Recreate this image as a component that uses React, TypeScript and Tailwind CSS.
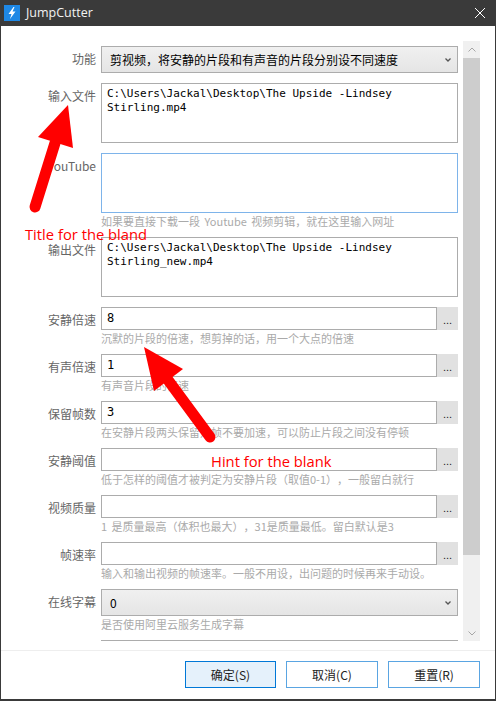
const CJK = 'font-["Noto_Sans_CJK_SC",sans-serif]';

function Row({ label, hint, children }: { label: string; hint?: string; children: React.ReactNode }) {
  return (
    <div className={hint ? 'mb-0 flex' : 'mb-[10px] flex'}>
      <div className="w-[95px] shrink-0 whitespace-nowrap pt-[5px] pr-0 text-right text-[12px] leading-[16px] text-[#666]">{label}</div>
      <div className="ml-[5px] w-[357px] shrink-0">
        {children}
        {hint && (
          <div className="h-[24px] whitespace-nowrap pt-[1px] text-[11px] leading-[14px] text-[#aaa] [text-spacing-trim:space-all] [word-spacing:2px]">
            {hint}
          </div>
        )}
      </div>
    </div>
  );
}

function Select({ value }: { value: string }) {
  return (
    <div className="flex h-[27px] items-center justify-between border border-[#acacac] bg-gradient-to-b from-[#f0f0f0] to-[#e5e5e5] pr-[3px] pl-[8px] text-[12px] text-black">
      <span>{value}</span>
      <svg width="12" height="12" viewBox="0 0 12 12" fill="none" stroke="#555" strokeWidth="1.3">
        <path d="M3.5 4.5 6 7l2.5-2.5" />
      </svg>
    </div>
  );
}

function Area({ value, focus }: { value?: string; focus?: boolean }) {
  return (
    <div
      className={`h-[60px] border bg-white pt-[3px] pl-[5px] font-["DejaVu_Sans_Mono",monospace] text-[11px] leading-[14px] whitespace-pre-line text-black ${
        focus ? 'border-[#7eb4ea]' : 'border-[#acacac]'
      }`}
    >
      {value}
    </div>
  );
}

function NumInput({ value }: { value?: string }) {
  return (
    <div className="flex h-[23px]">
      <div className="flex-1 border border-[#acacac] bg-white pl-[5px] font-['DejaVu_Sans_Mono',monospace] text-[12px] leading-[20px] text-black">
        {value}
      </div>
      <div className="flex w-[21px] items-end justify-center bg-[#e1e1e1] pb-[4px] font-['Liberation_Sans',sans-serif] text-[11px] leading-[12px] text-[#222]">
        ...
      </div>
    </div>
  );
}

function Btn({ label, primary }: { label: string; primary?: boolean }) {
  return (
    <div
      className={`flex h-[27px] items-center justify-center border text-[12px] text-[#222] ${
        primary ? 'w-[91px] border-[#0078d7] bg-[#e5f1fb]' : 'w-[92px] border-[#5aa5e2] bg-white'
      }`}
    >
      {label}
    </div>
  );
}

function Scrollbar() {
  return (
    <div className="mt-[15px] flex h-[600px] w-[17px] flex-col bg-[#f0f0f0]">
      <div className="flex h-[17px] items-center justify-center">
        <svg width="10" height="10" viewBox="0 0 10 10" fill="none" stroke="#a6a6a6" strokeWidth="1">
          <path d="M1.5 6.5 5 3l3.5 3.5" />
        </svg>
      </div>
      <div className="h-[497px] bg-[#cdcdcd]" />
      <div className="flex-1" />
      <div className="flex h-[17px] items-center justify-center">
        <svg width="10" height="10" viewBox="0 0 10 10" fill="none" stroke="#a6a6a6" strokeWidth="1">
          <path d="M1.5 3.5 5 7l3.5-3.5" />
        </svg>
      </div>
    </div>
  );
}

export default function App() {
  return (
    <div className={`relative flex h-[701px] w-[496px] flex-col border-x border-b-2 border-[#3a3a3a] bg-white ${CJK}`}>
      <div className="flex h-[26px] shrink-0 items-center justify-between bg-[#3a3a3a] pr-[10px] pl-[3px]">
        <div className="flex items-center gap-[6px]">
          <svg width="16" height="16" viewBox="0 0 16 16">
            <rect width="16" height="16" fill="#1e88e5" />
            <path d="M9.5 2 4.5 9h3L6 14l5.5-7.5h-3L10.5 2z" fill="#fff" />
          </svg>
          <span className="font-['Open_Sans',sans-serif] text-[12.5px] text-[#f2f2f2]">JumpCutter</span>
        </div>
        <svg width="10" height="10" viewBox="0 0 10 10" stroke="#fff" strokeWidth="1">
          <path d="M0 0l10 10M10 0 0 10" />
        </svg>
      </div>

      <div className="flex h-[625px] shrink-0 border-b border-[#eeeeee]">
        <div className="w-[457px] shrink-0 pt-[20px]">
          <Row label="功能">
            <Select value="剪视频，将安静的片段和有声音的片段分别设不同速度" />
          </Row>
          <Row label="输入文件">
            <Area value={'C:\\Users\\Jackal\\Desktop\\The Upside -Lindsey\nStirling.mp4'} />
          </Row>
          <Row label="YouTube" hint="如果要直接下载一段 Youtube 视频剪辑，就在这里输入网址">
            <Area focus />
          </Row>
          <Row label="输出文件">
            <Area value={'C:\\Users\\Jackal\\Desktop\\The Upside -Lindsey\nStirling_new.mp4'} />
          </Row>
          <Row label="安静倍速" hint="沉默的片段的倍速，想剪掉的话，用一个大点的倍速">
            <NumInput value="8" />
          </Row>
          <Row label="有声倍速" hint="有声音片段的倍速">
            <NumInput value="1" />
          </Row>
          <Row label="保留帧数" hint="在安静片段两头保留几帧不要加速，可以防止片段之间没有停顿">
            <NumInput value="3" />
          </Row>
          <Row label="安静阈值" hint="低于怎样的阈值才被判定为安静片段（取值0-1），一般留白就行">
            <NumInput />
          </Row>
          <Row label="视频质量" hint="1 是质量最高（体积也最大），31是质量最低。留白默认是3">
            <NumInput />
          </Row>
          <Row label="帧速率" hint="输入和输出视频的帧速率。一般不用设，出问题的时候再来手动设。">
            <NumInput />
          </Row>
          <Row label="在线字幕" hint="是否使用阿里云服务生成字幕">
            <Select value="0" />
          </Row>
          <div className="ml-[100px] w-[357px] border-t border-[#acacac]" />
        </div>
        <div className="ml-[5px]">
          <Scrollbar />
        </div>
      </div>

      <div className="flex justify-end gap-[10px] pt-[10px] pr-[15px]">
        <Btn label="确定(S)" primary />
        <Btn label="取消(C)" />
        <Btn label="重置(R)" />
      </div>

      {/* red annotations drawn over the screenshot */}
      <svg className="pointer-events-none absolute top-0 -left-px" width="496" height="701">
        <g fill="#ff0000" stroke="#ff0000" strokeLinecap="round">
          <path d="M35 207 55 143" strokeWidth="11" fill="none" />
          <path d="M68 105 38 137 73 148z" strokeWidth="0" />
          <path d="M210 437 168 380" strokeWidth="11" fill="none" />
          <path d="M144 347 183 369 154 391z" strokeWidth="0" />
        </g>
      </svg>
      <div className="absolute top-[227px] left-[24px] font-['Open_Sans',sans-serif] text-[14.75px] leading-[14px] whitespace-nowrap text-[#ff0000]">
        Title for the bland
      </div>
      <div className="absolute top-[454px] left-[210px] font-['Open_Sans',sans-serif] text-[14.75px] leading-[14px] whitespace-nowrap text-[#ff0000]">
        Hint for the blank
      </div>
    </div>
  );
}
